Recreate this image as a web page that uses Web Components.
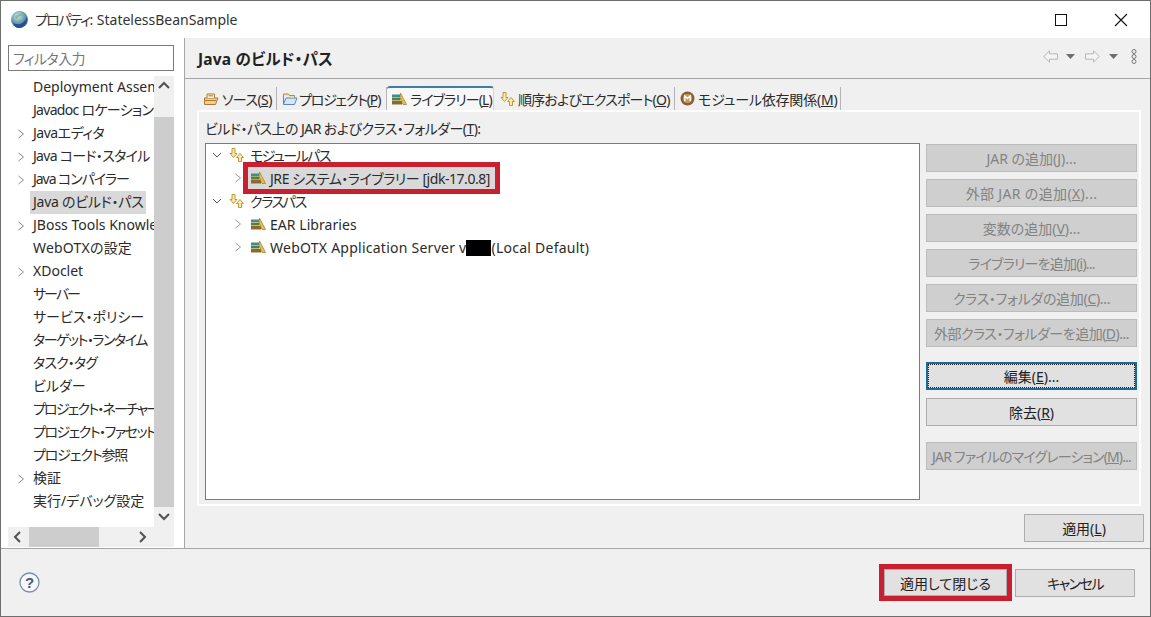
<!DOCTYPE html>
<html lang="ja">
<head>
<meta charset="utf-8">
<title>プロパティ</title>
<style>
  html, body { margin: 0; height: 100%; }
  body {
    font: 14px "Noto Sans", "Noto Sans CJK JP", sans-serif;
    font-feature-settings: "palt";
    color: #222;
    overflow: hidden;
  }
</style>
</head>
<body>
<prop-dialog></prop-dialog>

<script>
const ICONS = {
  lib: `<svg width="16" height="14" viewBox="0 0 16 14"><path d="M1 2.500h8v2.500H1z" fill="#3f8f86"/><path d="M1 5.500h8.500v3H1z" fill="#5a7d3a"/><path d="M1 9h10v3.500H1z" fill="#8d6a2c"/><path d="M9.500 1 15.500 12.500h-3.500L9 5.500z" fill="#e3c15a" stroke="#9a7a24" stroke-width=".7"/></svg>`,
  order: `<svg width="17" height="16" viewBox="0 0 17 16" fill="#fbe9a8" stroke="#b98f2c" stroke-width=".9"><path d="M4 1.500h3v5h2l-3.500 4-3.500-4h2z"/><path d="M12 6.500l3.500 4h-2v4h-3v-4h-2z"/></svg>`,
  folderSrc: `<svg width="16" height="14" viewBox="0 0 16 14"><path d="M1.500 6V12.500h11L15 6z" fill="#f3cf8c" stroke="#a9793a"/><path d="M4 6V2h7.500v4" fill="#fff3d6" stroke="#a9793a"/><path d="M5.500 3.800h4.500M1 8.500h12" stroke="#a9793a"/></svg>`,
  folderPrj: `<svg width="16" height="14" viewBox="0 0 16 14"><path d="M1.500 3V12.500h11L15 6H4L1.500 12" fill="#d5e6f7" stroke="#5d86b5"/><path d="M1.500 3.500V2h5l1 1.500h5V6" fill="#f2e3ba" stroke="#a28a4f"/></svg>`,
  module: `<svg width="15" height="15" viewBox="0 0 14 14"><circle cx="7" cy="7" r="6.500" fill="#8c5f2e"/><circle cx="7" cy="7" r="4.300" fill="#c09a68"/><path d="M4.500 9.500v-5L7 7l2.500-2.500v5" fill="none" stroke="#fff" stroke-width="1.300"/></svg>`
};

const text = s => s.replace(/\((.)\)/, '(<u>$1</u>)');

class WinTitlebar extends HTMLElement {
  constructor() {
    super();
    this.attachShadow({ mode: 'open' });
    this.shadowRoot.innerHTML = `
      <style>
        :host { display: flex; align-items: center; height: 37px; background: #fff; padding-left: 9px; }
        .title { margin-left: 5px; padding-bottom: 2px; font-size: 14px; color: #333; flex: 1; }
        .btn { width: 58px; display: flex; justify-content: center; }
      </style>
      <svg width="20" height="20" viewBox="0 0 20 20">
        <defs><radialGradient id="g" cx=".4" cy=".3" r=".8"><stop offset="0" stop-color="#cfe6ee"/><stop offset=".55" stop-color="#5f95ad"/><stop offset="1" stop-color="#2d5f7d"/></radialGradient></defs>
        <circle cx="9.500" cy="9.500" r="8.500" fill="url(#g)"/>
        <path d="M3 13c5 3 11 1 14-6 1 6-3 11-8 11-3 0-5-2-6-5z" fill="#254f92"/>
        <path d="M5 7c2-3 6-4 9-2-3 0-5 1-7 4z" fill="#7fb56f" opacity=".8"/>
      </svg>
      <span class="title"><span style="letter-spacing:-1.600px">プロパティ</span>: StatelessBeanSample</span>
      <span class="btn" style="margin-right:2px"><svg width="12" height="12"><rect x=".5" y=".5" width="11" height="11" fill="none" stroke="#111"/></svg></span>
      <span class="btn"><svg width="14" height="14"><path d="M1 1l12 12M13 1L1 13" stroke="#111" stroke-width="1.100"/></svg></span>`;
  }
}

class ScrollBar extends HTMLElement {
  constructor() {
    super();
    this.attachShadow({ mode: 'open' });
    const horizontal = this.hasAttribute('horizontal');
    const before = horizontal ? 'M9 5l-5 5 5 5' : 'M3 12l5-5 5 5';
    const after = horizontal ? 'M4 5l5 5-5 5' : 'M3 7l5 5 5-5';
    this.shadowRoot.innerHTML = `
      <style>
        :host { display: flex; flex-direction: ${horizontal ? 'row' : 'column'}; background: #f0f0f0; flex: none; }
        .arrow { flex: none; width: ${horizontal ? '21px' : '20px'}; height: 20px; display: flex; align-items: center; justify-content: center; }
        .track { flex: 1; display: flex; flex-direction: ${horizontal ? 'row' : 'column'}; }
        .thumb { background: #cdcdcd; }
        .thumb.h { width: 70px; }
        .thumb.v { flex: 1; margin-top: 21px; }
      </style>
      <span class="arrow"><svg width="16" height="20" viewBox="0 0 16 20"><path d="${before}" fill="none" stroke="#505050" stroke-width="2"/></svg></span>
      <div class="track"><div class="thumb ${horizontal ? 'h' : 'v'}"></div></div>
      <span class="arrow"><svg width="16" height="20" viewBox="0 0 16 20"><path d="${after}" fill="none" stroke="#505050" stroke-width="2"/></svg></span>`;
  }
}

class NavList extends HTMLElement {
  constructor() {
    super();
    this.attachShadow({ mode: 'open' });
    // label, has twisty, selected, letter spacing (the reference's kana are narrower)
    const rows = [
      ['Deployment Assembly', 0, 0, 0], ['Javadoc ロケーション', 0, 0, -.7], ['Javaエディタ', 1, 0, -.5], ['Java コード・スタイル', 1, 0, -.7],
      ['Java コンパイラー', 1, 0, -1.050], ['Java のビルド・パス', 0, 1, -.25], ['JBoss Tools Knowledge', 1, 0, 0], ['WebOTXの設定', 0, 0, .2],
      ['XDoclet', 1, 0, 0], ['サーバー', 0, 0, -2], ['サービス・ポリシー', 0, 0, 0], ['ターゲット・ランタイム', 0, 0, -1.500], ['タスク・タグ', 0, 0, -.8],
      ['ビルダー', 0, 0, 0], ['プロジェクト・ネーチャー', 0, 0, -1.800], ['プロジェクト・ファセット', 0, 0, -1.500], ['プロジェクト参照', 0, 0, -1.100],
      ['検証', 1, 0, 0], ['実行/デバッグ設定', 0, 0, 0]
    ];
    this.shadowRoot.innerHTML = `
      <style>
        :host { display: grid; grid-template: minmax(0, 1fr) 20px / 146px 20px; margin-top: 5px; min-height: 0; flex: 1; }
        .rows { overflow: hidden; }
        .row { height: 23px; display: flex; align-items: center; white-space: nowrap; font-size: 14px; color: #2b2b2b; }
        .tw { width: 22px; flex: none; display: flex; justify-content: center; padding-left: 4px; box-sizing: border-box; }
        .label { padding: 0 3px 1px; line-height: 22px; }
        .sel { background: #d9d9d9; width: 110px; flex: none; }
        .corner { background: #f0f0f0; }
      </style>
      <div class="rows">
        ${rows.map(([t, tw, sel, ls]) => `<div class="row"><span class="tw">${tw ? '<svg width="8" height="12"><path d="M1.500 2l5 4-5 4" fill="none" stroke="#8a8a8a"/></svg>' : ''}</span><span class="label${sel ? ' sel' : ''}" style="letter-spacing:${ls}px">${t}</span></div>`).join('')}
      </div>
      <scroll-bar></scroll-bar>
      <scroll-bar horizontal></scroll-bar>
      <div class="corner"></div>`;
  }
}

class TabBar extends HTMLElement {
  constructor() {
    super();
    this.attachShadow({ mode: 'open' });
    const tabs = [
      ['folderSrc', 'ソース(S)', 79, -.6, 3], ['folderPrj', 'プロジェクト(P)', 110, -1.200, 1], ['lib', 'ライブラリー(L)', 107, -.9, 3, 1],
      ['order', '順序およびエクスポート(O)', 181, -.8, 2], ['module', 'モジュール依存関係(M)', 166, -.2, 3]
    ];
    this.shadowRoot.innerHTML = `
      <style>
        :host { display: flex; align-items: flex-end; height: 24px; padding-left: 1px; }
        .tab { display: flex; align-items: center; height: 23px; box-sizing: border-box; padding-left: 5px; border-right: 1px solid #b5b5b5; white-space: nowrap; font-size: 14px; color: #2b2b2b; }
        .tab svg { flex: none; }
        .on { background: #f7f7f7; height: 24px; border-top: 2px solid #3e7ca3; border-right: 1px solid #d5d5d5; border-radius: 3px 3px 0 0; padding-left: 4px; }
      </style>
      ${tabs.map(([i, t, w, ls, gap, on]) => `<div class="tab${on ? ' on' : ''}" style="width:${w}px;gap:${gap}px">${ICONS[i]}<span style="letter-spacing:${ls}px">${text(t)}</span></div>`).join('')}`;
  }
}

class TreeView extends HTMLElement {
  constructor() {
    super();
    this.attachShadow({ mode: 'open' });
    const open = '<svg width="10" height="10"><path d="M1 3l4 4 4-4" fill="none" stroke="#555"/></svg>';
    const closed = '<svg width="8" height="12"><path d="M1.500 2l5 4-5 4" fill="none" stroke="#999"/></svg>';
    const row = (level, tw, icon, label, ls = 0) => `<div class="row l${level}"><span class="tw">${tw}</span>${icon}<span class="label" style="letter-spacing:${ls}px">${label}</span></div>`;
    this.shadowRoot.innerHTML = `
      <style>
        :host { display: block; background: #fff; border: 1px solid #7a7a7a; box-sizing: border-box; }
        .row { height: 23px; box-sizing: border-box; padding-bottom: 1px; display: flex; align-items: center; white-space: nowrap; color: #2b2b2b; font-size: 14px; }
        .row svg { flex: none; }
        .l0 { padding-left: 3px; }
        .l1 { padding-left: 24px; }
        .tw { width: 16px; display: flex; justify-content: center; flex: none; margin-right: 3px; }
        .l1 .tw { width: 15px; margin-right: 5px; }
        .l0 .label { margin-left: 5px; }
        .l1 .label { margin-left: 4px; }
        .box { display: flex; align-items: center; gap: 4px; height: 22px; padding: 0 5px 0 2px; background: #d9d9d9; outline: 5px solid #c8202e; margin-left: -2px; }
        .mask { display: inline-block; width: 25px; height: 16px; background: #000; vertical-align: -3px; }
      </style>
      ${row(0, open, ICONS.order, 'モジュールパス', -1.500)}
      <div class="row l1"><span class="tw">${closed}</span><div class="box">${ICONS.lib}<span style="letter-spacing:-.45px">JRE システム・ライブラリー [jdk-17.0.8]</span></div></div>
      ${row(0, open, ICONS.order, 'クラスパス', -1.400)}
      ${row(1, closed, ICONS.lib, 'EAR Libraries', .05)}
      ${row(1, closed, ICONS.lib, 'WebOTX Application Server v<span class="mask"></span>(Local Default)', .25)}`;
  }
}

class PushButton extends HTMLElement {
  constructor() {
    super();
    this.attachShadow({ mode: 'open' });
    this.shadowRoot.innerHTML = `
      <style>
        :host { display: flex; align-items: center; justify-content: center; height: 28px; box-sizing: border-box; background: #e1e1e1; border: 1px solid #adadad; color: #222; font-size: 14px; white-space: nowrap; }
        :host([disabled]) { background: #cfcfcf; border-color: #bcbcbc; color: #838383; }
        :host([focus]) { border: 2px solid #1c6a9a; outline: 1px dotted #222; outline-offset: -3px; }
        :host([marked]) { outline: 5px solid #c8202e; height: 27px; }
      </style>
      <span></span>`;
  }
  connectedCallback() {
    this.shadowRoot.querySelector('span').innerHTML = text(this.getAttribute('label'));
  }
}

class BuildPathPage extends HTMLElement {
  constructor() {
    super();
    this.attachShadow({ mode: 'open' });
    const sideButtons = [
      ['JAR の追加(J)...', 0], ['外部 JAR の追加(X)...', .35], ['変数の追加(V)...', 0], ['ライブラリーを追加(i)...', -.8],
      ['クラス・フォルダの追加(C)...', -.3], ['外部クラス・フォルダーを追加(D)...', -.5]
    ];
    this.shadowRoot.innerHTML = `
      <style>
        :host { display: flex; flex-direction: column; flex: 1; min-width: 0; background: #f0f0f0; }
        .head { height: 41px; display: flex; align-items: center; padding: 0 13px 0 13px; border-bottom: 1px solid #a6a6a6; box-sizing: border-box; flex: none; }
        h1 { margin: 0; flex: 1; font-size: 15.500px; letter-spacing: .2px; font-weight: 700; color: #222; }
        .tools { display: flex; align-items: center; margin-bottom: 4px; }
        .tools svg { flex: none; }
        .tabs-wrap { padding: 7px 7px 0 12px; display: flex; flex-direction: column; flex: 1; min-height: 0; }
        .panel { border: 2px solid #fff; background: #f0f0f0; height: 396px; flex: none; box-sizing: border-box; padding: 7px 6px 4px 6px; margin-right: 2px; display: flex; flex-direction: column; }
        .caption { font-size: 14px; letter-spacing: -.55px; color: #2b2b2b; line-height: 20px; margin-bottom: 4px; }
        .body { flex: 1; display: grid; grid-template-columns: 715px 211px; column-gap: 6px; min-height: 0; }
        .side { display: flex; flex-direction: column; padding-top: 1px; }
        .side push-button { margin-bottom: 7px; }
        .foot { display: flex; justify-content: flex-end; padding-top: 8px; margin-right: -1px; }
        .foot push-button { width: 120px; }
      </style>
      <div class="head">
        <h1>Java のビルド・パス</h1>
        <div class="tools">
          <svg width="15" height="13" viewBox="0 0 15 13"><path d="M.8 6.500L6.500.8v3h8v5.400h-8v3z" fill="#f4f4f4" stroke="#b5b5b5"/></svg>
          <svg width="9" height="5" style="margin-left:8px"><path d="M0 0h9L4.500 5z" fill="#6e6e6e"/></svg>
          <svg width="15" height="13" viewBox="0 0 15 13" style="margin-left:10px"><path d="M14.200 6.500L8.500.8v3h-8v5.400h8v3z" fill="#f4f4f4" stroke="#b5b5b5"/></svg>
          <svg width="9" height="5" style="margin-left:9px"><path d="M0 0h9L4.500 5z" fill="#6e6e6e"/></svg>
          <svg width="6" height="15" viewBox="0 0 6 15" style="margin-left:13px" fill="none" stroke="#777"><circle cx="3" cy="2.500" r="2"/><circle cx="3" cy="7.500" r="2"/><circle cx="3" cy="12.500" r="2"/></svg>
        </div>
      </div>
      <div class="tabs-wrap">
        <tab-bar></tab-bar>
        <div class="panel">
          <div class="caption">${text('ビルド・パス上の JAR およびクラス・フォルダー(T):')}</div>
          <div class="body">
            <tree-view></tree-view>
            <div class="side">
              ${sideButtons.map(([l, ls]) => `<push-button disabled label="${l}" style="letter-spacing:${ls}px"></push-button>`).join('')}
              <push-button focus label="編集(E)..." style="margin-top:8px;margin-bottom:8px"></push-button>
              <push-button label="除去(R)" style="margin-bottom:16px"></push-button>
              <push-button disabled label="JAR ファイルのマイグレーション(M)..." style="letter-spacing:-.85px"></push-button>
            </div>
          </div>
        </div>
        <div class="foot"><push-button label="適用(L)"></push-button></div>
      </div>`;
  }
}

class PropDialog extends HTMLElement {
  constructor() {
    super();
    this.attachShadow({ mode: 'open' });
    this.shadowRoot.innerHTML = `
      <style>
        :host { display: flex; flex-direction: column; width: 1151px; height: 617px; box-sizing: border-box; border: 1px solid #6e6e6e; background: #f0f0f0; }
        .main { display: flex; height: 510px; flex: none; }
        .left { flex: none; background: #fff; border-right: 1px solid #a6a6a6; display: flex; flex-direction: column; padding: 0 10px 1px 7px; box-sizing: border-box; width: 184px; }
        .filter { margin-top: 7px; height: 26px; box-sizing: border-box; border: 1px solid #7a7a7a; display: flex; align-items: center; padding-left: 4px; color: #777; font-size: 14px; letter-spacing: -.6px; flex: none; }
        .footer { flex: 1; border-top: 1px solid #a6a6a6; display: flex; align-items: center; padding: 0 15px 0 18px; }
        .help { flex: 1; display: flex; }
        .cancel { width: 120px; }
        .ok { width: 123px; margin-right: 8px; }
      </style>
      <win-titlebar></win-titlebar>
      <div class="main">
        <div class="left">
          <div class="filter">フィルタ入力</div>
          <nav-list></nav-list>
        </div>
        <build-path-page></build-path-page>
      </div>
      <div class="footer">
        <div class="help"><svg width="21" height="21" viewBox="0 0 21 21"><circle cx="10.500" cy="10.500" r="9.500" fill="#f6f8fb" stroke="#7b8ea8" stroke-width="1.300"/><text x="10.500" y="16" font-size="15" font-weight="700" text-anchor="middle" fill="#45597a" font-family="Liberation Sans">?</text></svg></div>
        <push-button class="ok" marked label="適用して閉じる"></push-button>
        <push-button class="cancel" label="キャンセル" style="letter-spacing:-1.500px"></push-button>
      </div>`;
  }
}

customElements.define('scroll-bar', ScrollBar);
customElements.define('push-button', PushButton);
customElements.define('win-titlebar', WinTitlebar);
customElements.define('nav-list', NavList);
customElements.define('tab-bar', TabBar);
customElements.define('tree-view', TreeView);
customElements.define('build-path-page', BuildPathPage);
customElements.define('prop-dialog', PropDialog);
</script>
</body>
</html>
